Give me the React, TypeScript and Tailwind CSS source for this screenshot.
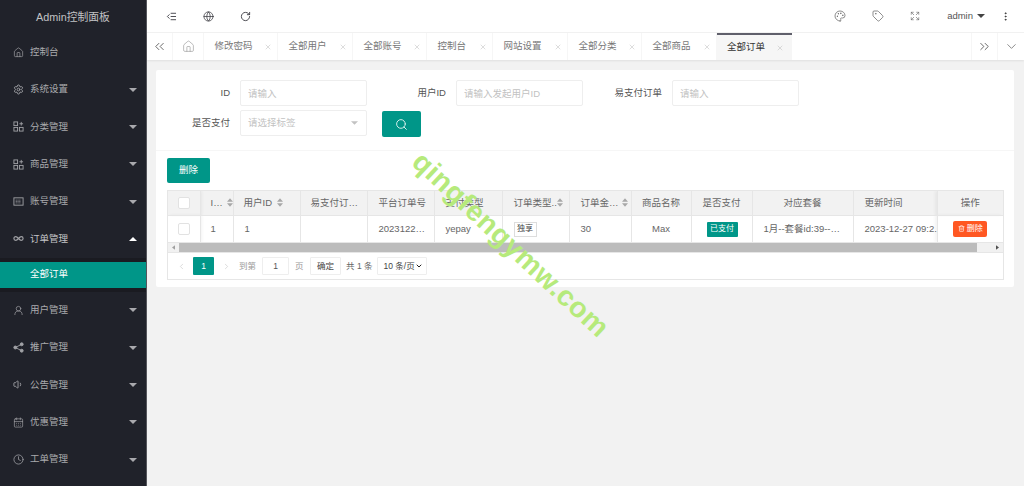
import {
  CalendarDays,
  ChevronDown,
  ChevronLeft,
  ChevronRight,
  ChevronsLeft,
  ChevronsRight,
  Clock,
  EllipsisVertical,
  Expand,
  Globe,
  House,
  IndentDecrease,
  Infinity as InfinityIcon,
  Palette,
  RotateCw,
  Search,
  Settings,
  Tag,
  Trash2,
  UserRound,
  Volume1,
  X,
} from 'lucide-react'
import type { ReactNode } from 'react'

const font = 'font-["Liberation_Sans","Noto_Sans_CJK_SC",sans-serif]'

function BlocksIcon() {
  return (
    <svg viewBox="0 0 12 12" className="w-[11px] h-[11px]" fill="none" stroke="currentColor" strokeWidth="1">
      <rect x="1" y="1" width="4" height="4" />
      <rect x="1" y="7" width="4" height="4" />
      <rect x="7" y="7" width="4" height="4" />
      <path d="M9 1v4M7 3h4" />
    </svg>
  )
}

function KeypadIcon() {
  return (
    <svg viewBox="0 0 12 12" className="w-[11px] h-[11px]" fill="none" stroke="currentColor" strokeWidth="1">
      <rect x="1" y="2" width="10" height="8" />
      <path d="M3 4.5h6M3 6h6M3 7.5h6" strokeDasharray="1 1" />
    </svg>
  )
}

function ShareIcon() {
  return (
    <svg viewBox="0 0 12 12" className="w-[11px] h-[11px]" fill="currentColor" stroke="currentColor" strokeWidth="1">
      <circle cx="2.5" cy="6" r="1.6" />
      <circle cx="9.5" cy="2.5" r="1.6" />
      <circle cx="9.5" cy="9.5" r="1.6" />
      <path d="M2.5 6l7-3.5M2.5 6l7 3.5" fill="none" />
    </svg>
  )
}

function Caret({ up }: { up?: boolean }) {
  return (
    <svg viewBox="0 0 8 4" className="w-[8px] h-[4px] ml-auto mr-[9px]" fill={up ? '#ffffff' : '#a9a9ad'}>
      <path d={up ? 'M0 4L4 0l4 4z' : 'M0 0h8L4 4z'} />
    </svg>
  )
}

function MenuItem({ icon, label, arrow, up }: { icon: ReactNode; label: string; arrow?: boolean; up?: boolean }) {
  return (
    <div className="flex items-center h-[37.35px] pl-[13px] text-[#a9aaad] text-[9.5px]">
      <span className="w-[11px] flex justify-center text-[#a0a1a5]">{icon}</span>
      <span className={up ? 'ml-[6px] text-[#c4c5c7]' : 'ml-[6px]'}>{label}</span>
      {arrow && <Caret up={up} />}
    </div>
  )
}

function Sidebar() {
  const ic = 'w-[11px] h-[11px]'
  return (
    <aside className="w-[147px] shrink-0 bg-[#20222a] border-r border-[#55565c]">
      <div className="h-[33.5px] flex items-center justify-center text-[10.8px] text-[#c2c3c5]">Admin控制面板</div>
      <MenuItem icon={<House className={ic} strokeWidth={1.5} />} label="控制台" />
      <MenuItem icon={<Settings className={ic} strokeWidth={2} />} label="系统设置" arrow />
      <MenuItem icon={<BlocksIcon />} label="分类管理" arrow />
      <MenuItem icon={<BlocksIcon />} label="商品管理" arrow />
      <MenuItem icon={<KeypadIcon />} label="账号管理" arrow />
      <MenuItem icon={<InfinityIcon className={ic} strokeWidth={2.6} />} label="订单管理" arrow up />
      <div className="bg-[#1a1b21] py-[4px]">
        <div className="h-[26px] bg-[#009688] text-white text-[9.5px] pl-[30px] flex items-center">全部订单</div>
      </div>
      <MenuItem icon={<UserRound className={ic} strokeWidth={1.5} />} label="用户管理" arrow />
      <MenuItem icon={<ShareIcon />} label="推广管理" arrow />
      <MenuItem icon={<Volume1 className={ic} strokeWidth={2} />} label="公告管理" arrow />
      <MenuItem icon={<CalendarDays className={ic} strokeWidth={1.5} />} label="优惠管理" arrow />
      <MenuItem icon={<Clock className={ic} strokeWidth={1.7} />} label="工单管理" arrow />
    </aside>
  )
}

function TopBar() {
  const ic = 'w-[11px] h-[11px] text-[#3f3f46]'
  return (
    <header className="h-[33px] bg-white flex items-center shrink-0 border-b border-[#f2f2f2] text-[#555]">
      <div className="flex items-center gap-[26px] pl-[19px]">
        <IndentDecrease className={ic} strokeWidth={2} />
        <Globe className={ic} strokeWidth={1.7} />
        <RotateCw className={ic} strokeWidth={2} />
      </div>
      <div className="ml-auto flex items-center text-[#666]">
        <Palette className="w-[12px] h-[12px]" strokeWidth={1.5} />
        <Tag className="w-[12px] h-[12px] ml-[26px]" strokeWidth={1.5} />
        <Expand className="w-[10px] h-[10px] ml-[26px]" strokeWidth={1.5} />
        <span className="ml-[27px] text-[9.5px] text-[#555]">admin</span>
        <svg viewBox="0 0 8 4" className="w-[8px] h-[4px] ml-[4px]" fill="#444"><path d="M0 0h8L4 4z" /></svg>
        <EllipsisVertical className="w-[11px] h-[11px] ml-[15px] mr-[13px] text-[#333]" strokeWidth={2} />
      </div>
    </header>
  )
}

const tabs = [
  { label: '修改密码', w: 'w-[74px]' },
  { label: '全部用户', w: 'w-[75px]' },
  { label: '全部账号', w: 'w-[74px]' },
  { label: '控制台', w: 'w-[66px]' },
  { label: '网站设置', w: 'w-[75px]' },
  { label: '全部分类', w: 'w-[74px]' },
  { label: '全部商品', w: 'w-[75px]' },
]

function TabBar() {
  return (
    <nav className="h-[27px] bg-white flex items-stretch shrink-0 shadow-[0_1px_2px_rgba(0,0,0,0.08)] relative text-[9.5px] text-[#777]">
      <div className="w-[26px] flex items-center justify-center border-r border-[#f6f6f6]">
        <ChevronsLeft className="w-[15px] h-[15px] text-[#555]" strokeWidth={1.4} />
      </div>
      <div className="w-[31px] flex items-center justify-center border-r border-[#f6f6f6]">
        <House className="w-[13px] h-[13px] text-[#999]" strokeWidth={1.2} />
      </div>
      {tabs.map((t) => (
        <div key={t.label} className={t.w + ' flex items-center pl-[10.5px] border-r border-[#f6f6f6]'}>
          <span>{t.label}</span>
          <X className="w-[8px] h-[8px] ml-auto mr-[5px] text-[#bbb]" strokeWidth={1.5} />
        </div>
      ))}
      <div className="w-[75px] flex items-center pl-[10px] bg-[#f6f6f6] border-t-2 border-[#5f5f6b] text-[#333]">
        <span>全部订单</span>
        <X className="w-[8px] h-[8px] ml-auto mr-[8px] text-[#bbb]" strokeWidth={1.5} />
      </div>
      <div className="ml-auto w-[26px] flex items-center justify-center border-l border-[#f6f6f6]">
        <ChevronsRight className="w-[15px] h-[15px] text-[#555]" strokeWidth={1.4} />
      </div>
      <div className="w-[27px] flex items-center justify-center border-l border-[#f6f6f6]">
        <ChevronDown className="w-[15px] h-[15px] text-[#666]" strokeWidth={1.2} />
      </div>
    </nav>
  )
}

function Field({ label, labelW, placeholder }: { label: string; labelW: string; placeholder: string }) {
  return (
    <>
      <label className={labelW + ' text-right text-[9.5px] text-[#555] mr-[10px]'}>{label}</label>
      <input
        placeholder={placeholder}
        className="w-[127px] h-[26px] border border-[#eeeeee] rounded-[2px] px-[7px] text-[9.5px] outline-none placeholder:text-[#c2c2c2]"
      />
    </>
  )
}

function SortIcon({ className = 'ml-[5px]' }: { className?: string }) {
  return (
    <svg viewBox="0 0 7 10" className={'w-[6px] h-[9px] shrink-0 ' + className} fill="#a8a8a8">
      <path d="M3.5 0L7 4H0zM0 6h7l-3.5 4z" />
    </svg>
  )
}

const th = 'h-[24px] border-r border-b border-[#e6e6e6] font-normal text-[9.5px] text-[#666] p-0'
const td = 'h-[27px] border-r border-[#e6e6e6] text-[9.5px] text-[#666] p-0'
const box = 'block w-[12px] h-[12px] mx-auto bg-white border border-[#e2e2e2] rounded-[2px]'
const leftShadow = ' shadow-[2px_0_3px_rgba(0,0,0,0.05)]'
const rightShadow = ' shadow-[-2px_0_3px_rgba(0,0,0,0.05)]'

function OrdersTable() {
  return (
    <table className="table-fixed border-collapse w-[835px]">
      <colgroup>
        <col className="w-[32px]" />
        <col className="w-[33px]" />
        <col className="w-[67px]" />
        <col className="w-[67px]" />
        <col className="w-[67px]" />
        <col className="w-[68px]" />
        <col className="w-[67px]" />
        <col className="w-[62px]" />
        <col className="w-[60px]" />
        <col className="w-[61px]" />
        <col className="w-[101px]" />
        <col className="w-[84px]" />
        <col className="w-[66px]" />
      </colgroup>
      <thead className="bg-[#f2f2f2]">
        <tr>
          <th className={th + leftShadow}>
            <span className={box} />
          </th>
          <th className={th}>
            <div className="flex items-center pl-[10px]">I…<SortIcon className="ml-[4px]" /></div>
          </th>
          <th className={th}>
            <div className="flex items-center pl-[10px]">用户ID<SortIcon /></div>
          </th>
          <th className={th + ' text-left pl-[10px]'}>易支付订…</th>
          <th className={th + ' text-left pl-[11px]'}>平台订单号</th>
          <th className={th + ' text-left pl-[11px]'}>支付类型</th>
          <th className={th}>
            <div className="flex items-center pl-[11px]">订单类型..<SortIcon className="ml-0" /></div>
          </th>
          <th className={th}>
            <div className="flex items-center pl-[11px]">订单金…<SortIcon className="ml-[3px]" /></div>
          </th>
          <th className={th + ' text-center'}>商品名称</th>
          <th className={th + ' text-center'}>是否支付</th>
          <th className={th + ' text-center'}>对应套餐</th>
          <th className={th + ' text-left pl-[11px]'}>更新时间</th>
          <th className={th + ' text-center border-r-0' + rightShadow}>操作</th>
        </tr>
      </thead>
      <tbody>
        <tr>
          <td className={td + leftShadow}>
            <span className={box} />
          </td>
          <td className={td + ' pl-[10px]'}>1</td>
          <td className={td + ' pl-[11px]'}>1</td>
          <td className={td} />
          <td className={td + ' pl-[11px]'}>2023122…</td>
          <td className={td + ' pl-[11px]'}>yepay</td>
          <td className={td + ' pl-[11px]'}>
            <span className="inline-flex items-center justify-center w-[23px] h-[15px] border border-[#dddddd] text-[8px] text-[#444]">独享</span>
          </td>
          <td className={td + ' pl-[11px]'}>30</td>
          <td className={td + ' text-center'}>Max</td>
          <td className={td + ' text-center'}>
            <span className="inline-flex items-center justify-center ml-[1px] w-[31px] h-[15px] bg-[#009688] rounded-[1px] text-[8px] text-white">已支付</span>
          </td>
          <td className={td + ' pl-[11px] whitespace-nowrap'}>1月--套餐id:39--…</td>
          <td className={td + ' pl-[11px] whitespace-nowrap overflow-hidden'}>2023-12-27 09:2.</td>
          <td className={td + ' text-center border-r-0' + rightShadow}>
            <span className="inline-flex items-center justify-center gap-[2px] w-[34px] h-[16px] bg-[#ff5722] rounded-[2px] text-[8px] text-white">
              <Trash2 className="w-[7px] h-[7px]" strokeWidth={2} />
              删除
            </span>
          </td>
        </tr>
      </tbody>
    </table>
  )
}

function ScrollBar() {
  return (
    <div className="h-[10px] bg-[#f1f1f1] border-t border-[#e6e6e6] flex items-center">
      <div className="w-[11px] flex justify-center">
        <svg viewBox="0 0 4 6" className="w-[3px] h-[5px]" fill="#a0a0a0"><path d="M4 0v6L0 3z" /></svg>
      </div>
      <div className="w-[798px] h-full bg-[#bcbcbc]" />
      <div className="ml-auto w-[11px] flex justify-center">
        <svg viewBox="0 0 4 6" className="w-[3px] h-[5px]" fill="#505050"><path d="M0 0v6l4-3z" /></svg>
      </div>
    </div>
  )
}

function Pager() {
  return (
    <div className="h-[27px] flex items-center border-t border-[#e6e6e6] pl-[9px] text-[8.5px] text-[#999]">
      <ChevronLeft className="w-[9px] h-[11px] text-[#c2c2c2]" strokeWidth={1.5} />
      <span className="ml-[7px] w-[21px] h-[18px] bg-[#009688] rounded-[1px] text-white flex items-center justify-center">1</span>
      <ChevronRight className="ml-[8px] w-[9px] h-[11px] text-[#c2c2c2]" strokeWidth={1.5} />
      <span className="ml-[8px]">到第</span>
      <span className="ml-[6px] w-[27px] h-[18px] border border-[#eeeeee] rounded-[1px] flex items-center justify-center text-[#555]">1</span>
      <span className="ml-[6px]">页</span>
      <span className="ml-[6.5px] w-[31px] h-[18px] border border-[#eeeeee] rounded-[1px] flex items-center justify-center text-[#444]">确定</span>
      <span className="ml-[5px] text-[#666]">共 1 条</span>
      <div className="ml-[5px] w-[50px] h-[18px] border border-[#eeeeee] rounded-[1px] pl-[5px] flex items-center text-[8.5px] text-[#444] bg-white">
        10 条/页
        <ChevronDown className="w-[8px] h-[8px] ml-auto mr-[3px] text-[#222]" strokeWidth={3} />
      </div>
    </div>
  )
}

function Content() {
  return (
    <section className="mt-[10px] ml-[9px] mr-[10px] bg-white rounded-[2px]">
      <div className="pt-[10px] pb-[12px] border-b border-[#f6f6f6]">
        <div className="flex items-center">
          <Field label="ID" labelW="w-[74px]" placeholder="请输入" />
          <Field label="用户ID" labelW="w-[79px]" placeholder="请输入发起用户ID" />
          <Field label="易支付订单" labelW="w-[79px]" placeholder="请输入" />
        </div>
        <div className="flex items-start mt-[4px]">
          <label className="w-[74px] leading-[26px] text-right text-[9.5px] text-[#555] mr-[10px]">是否支付</label>
          <div className="w-[127px] h-[26px] border border-[#eeeeee] rounded-[2px] px-[7px] flex items-center text-[9.5px] text-[#c2c2c2]">
            请选择标签
            <svg viewBox="0 0 8 4" className="w-[7px] h-[4px] ml-auto mr-[1px]" fill="#c2c2c2"><path d="M0 0h8L4 4z" /></svg>
          </div>
          <button className="ml-[15px] mt-[1px] w-[39px] h-[26px] mb-[1px] bg-[#009688] rounded-[2px] flex items-center justify-center text-[#d8f0ec]">
            <Search className="w-[13px] h-[13px]" strokeWidth={1.8} />
          </button>
        </div>
      </div>
      <div className="pl-[11px] pr-[10px] pt-[7px] pb-[7px]">
        <button className="block w-[43px] h-[25px] bg-[#009688] rounded-[2px] text-white text-[9.5px]">删除</button>
        <div className="mt-[7px] border border-[#e6e6e6] overflow-hidden">
          <OrdersTable />
          <ScrollBar />
          <Pager />
        </div>
      </div>
    </section>
  )
}

export default function App() {
  return (
    <div className={font + ' relative flex w-[1024px] h-[486px] overflow-hidden bg-[#f2f2f2]'}>
      <Sidebar />
      <main className="flex-1 min-w-0 flex flex-col">
        <TopBar />
        <TabBar />
        <Content />
      </main>
      {/* watermark over the page */}
      <span className='absolute left-[380px] top-[223px] w-[262px] text-center origin-center rotate-[43deg] text-[28.5px] font-["Liberation_Sans",sans-serif] font-bold tracking-[0.5px] text-[#b6ea7c] whitespace-nowrap pointer-events-none'>
        qingfengymw.com
      </span>
    </div>
  )
}
